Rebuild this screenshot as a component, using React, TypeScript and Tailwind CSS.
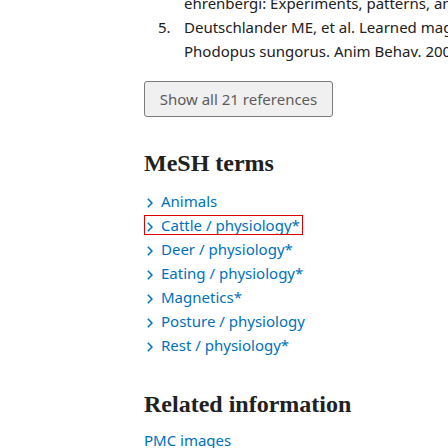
const meshTerms = [
  "Animals",
  "Cattle / physiology*",
  "Deer / physiology*",
  "Eating / physiology*",
  "Magnetics*",
  "Posture / physiology",
  "Rest / physiology*",
];

function Chevron() {
  return (
    <svg width="6" height="10" viewBox="0 0 6 10" className="mr-[8px] inline-block align-[-1px]">
      <path d="M0.8 0.8 L5 5 L0.8 9.2" fill="none" stroke="#0071bc" strokeWidth="1.5" />
    </svg>
  );
}

export default function App() {
  return (
    <div className="h-[448px] w-[448px] overflow-hidden bg-white font-['Noto_Sans',sans-serif] text-[15px] leading-[24px] text-[#212121]">
      <div className="ml-[144px] w-[680px] whitespace-nowrap">
        {/* References */}
        <ol className="-mt-[9px]">
          <li className="flex">
            <span className="w-[40px] shrink-0" />
            <span>ehrenbergi: Experiments, patterns, and mechanisms. J Comp Physiol A. 2000.</span>
          </li>
          <li className="flex">
            <span className="w-[40px] shrink-0 pl-[14px]">5.</span>
            <span>
              Deutschlander ME, et al. Learned magnetic compass orientation by the Siberian hamster,
              <br />
              Phodopus sungorus. Anim Behav. 2003.
            </span>
          </li>
        </ol>

        <button className="mt-[18px] h-[36px] w-[189px] rounded-[3px] border border-[#7b7b7b] bg-[#f0f0f0] text-[15px] text-[#5c5c5c]">
          Show all 21 references
        </button>

        {/* MeSH terms */}
        <h2 className="mt-[31px] font-['Liberation_Serif',serif] text-[24px] leading-[30px] font-bold text-[#212121]">
          MeSH terms
        </h2>
        <ul className="mt-[11px] text-[#0071bc]">
          {meshTerms.map((term, i) => (
            <li key={term}>
              <a
                href="#"
                className={
                  "pl-[3px] pr-[3px] " + (i === 1 ? "outline outline-1 -outline-offset-1 outline-[#e00000]" : "")
                }
              >
                <Chevron />
                {term}
              </a>
            </li>
          ))}
        </ul>

        {/* Related information */}
        <h2 className="mt-[32px] font-['Liberation_Serif',serif] text-[24px] leading-[30px] font-bold text-[#212121]">
          Related information
        </h2>
        <a href="#" className="mt-[9px] block text-[#0071bc]">
          PMC images
        </a>
      </div>
    </div>
  );
}
